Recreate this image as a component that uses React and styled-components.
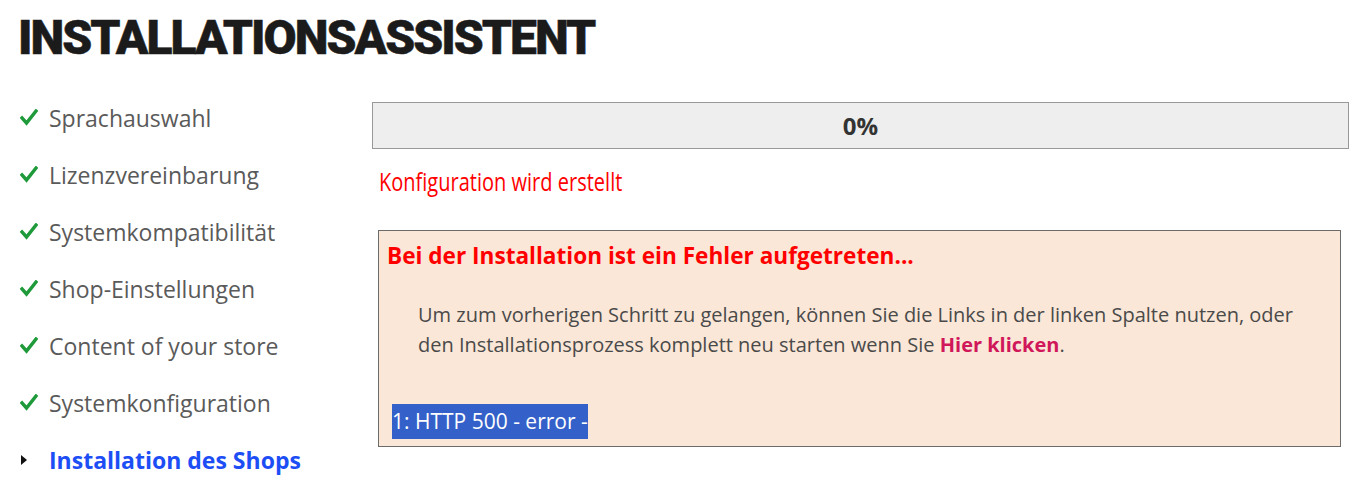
import React from "react";
import styled, { createGlobalStyle } from "styled-components";

const Global = createGlobalStyle`
  html, body { margin: 0; padding: 0; background: #fff; }
  body { font-family: "Open Sans", "Noto Sans", sans-serif; }
`;

const Page = styled.div`
  padding: 0 18px;
`;

const Title = styled.h1`
  margin: 0;
  padding-top: 13px;
  height: 84px;
  font-family: Roboto, Inter, "Liberation Sans", sans-serif;
  font-weight: 900;
  font-size: 48px;
  line-height: 50px;
  letter-spacing: -2px;
  color: #1b1b1b;
  -webkit-text-stroke: 0.5px #1b1b1b;
  box-sizing: border-box;
`;

const Layout = styled.div`
  display: grid;
  grid-template-columns: 354px 1fr;
`;

const Steps = styled.ul`
  list-style: none;
  margin: 0;
  padding: 5px 0 0 2px;
`;

const Step = styled.li`
  display: flex;
  align-items: center;
  height: 57px;
  font-size: 23px;
  font-weight: ${(p) => (p.$active ? 700 : 400)};
  color: ${(p) => (p.$active ? "#1d4ef5" : "#5a5a5a")};
`;

const Marker = styled.span`
  width: 29px;
  display: flex;
  align-items: center;
`;

const Main = styled.div`
  display: flex;
  flex-direction: column;
  align-items: stretch;
  padding-top: 18px;
`;

const Progress = styled.div`
  height: 47px;
  box-sizing: border-box;
  border: 1px solid #999;
  background: #eee;
  display: flex;
  align-items: center;
  justify-content: center;
  font-weight: 700;
  font-size: 24px;
  color: #333;
`;

const StatusRow = styled.div`
  margin: 18px 0 0 7px;
  height: 28px;
`;

const Status = styled.span`
  display: inline-block;
  font-size: 26px;
  line-height: 28px;
  color: #f00;
  transform: scaleX(0.77);
  transform-origin: left center;
  white-space: nowrap;
`;

const ErrorBox = styled.div`
  margin: 35px 8px 0 6px;
  height: 217px;
  box-sizing: border-box;
  border: 1px solid #6b6b6b;
  background: #fae7d7;
  padding: 10px 8px 0 8px;
`;

const ErrorTitle = styled.div`
  font-weight: 700;
  font-size: 22.6px;
  line-height: 30px;
  color: #f00;
`;

const Message = styled.p`
  margin: 29px 0 0 31px;
  font-size: 20px;
  line-height: 30px;
  color: #4a4a4a;
`;

const Link = styled.a`
  color: #d0175a;
  font-weight: 700;
  text-decoration: none;
`;

const ErrorLine = styled.div`
  margin: 44px 0 0 5px;
  height: 35px;
`;

const Highlight = styled.span`
  display: inline-block;
  background: #3461c9;
  color: #fff;
  font-size: 21px;
  line-height: 35px;
  height: 35px;
  white-space: nowrap;
`;

const Check = () => (
  <svg width="18" height="17" viewBox="0 0 18 17">
    <path d="M2 9 L6.5 14 L16 2" fill="none" stroke="#1f9a3a" strokeWidth="3.4" strokeLinecap="square" />
  </svg>
);

const Triangle = () => (
  <svg width="8" height="12" viewBox="0 0 8 12">
    <path d="M1 1 L7 6 L1 11 Z" fill="#111" />
  </svg>
);

const steps = [
  "Sprachauswahl",
  "Lizenzvereinbarung",
  "Systemkompatibilität",
  "Shop-Einstellungen",
  "Content of your store",
  "Systemkonfiguration",
];

export default function App() {
  return (
    <Page>
      <Global />
      <Title>INSTALLATIONSASSISTENT</Title>
      <Layout>
        <Steps>
          {steps.map((s) => (
            <Step key={s}>
              <Marker><Check /></Marker>
              {s}
            </Step>
          ))}
          <Step $active>
            <Marker><Triangle /></Marker>
            Installation des Shops
          </Step>
        </Steps>
        <Main>
          <Progress>0%</Progress>
          <StatusRow>
            <Status>Konfiguration wird erstellt</Status>
          </StatusRow>
          <ErrorBox>
            <ErrorTitle>Bei der Installation ist ein Fehler aufgetreten...</ErrorTitle>
            <Message>
              Um zum vorherigen Schritt zu gelangen, können Sie die Links in der linken Spalte nutzen, oder
              <br />
              den Installationsprozess komplett neu starten wenn Sie <Link href="#">Hier klicken</Link>.
            </Message>
            <ErrorLine>
              <Highlight>1: HTTP 500 - error -</Highlight>
            </ErrorLine>
          </ErrorBox>
        </Main>
      </Layout>
    </Page>
  );
}
